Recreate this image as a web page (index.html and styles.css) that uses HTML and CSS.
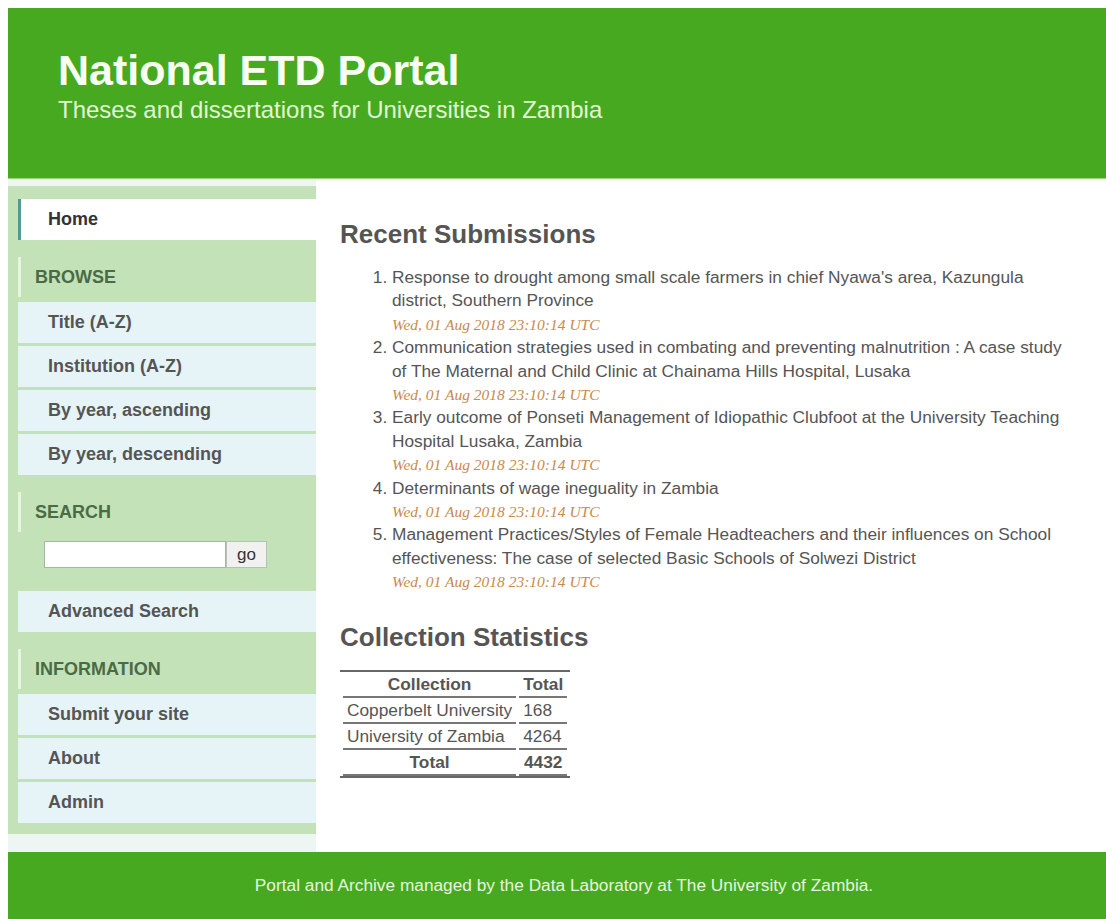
FILE: index.html
```html
<!DOCTYPE html>
<html lang="en">
<head>
<meta charset="utf-8">
<title>National ETD Portal</title>
<link rel="stylesheet" href="styles.css">
</head>
<body>
<div class="page">
  <header class="site-header">
    <h1 class="site-title">National ETD Portal</h1>
    <p class="site-tagline">Theses and dissertations for Universities in Zambia</p>
  </header>

  <div class="layout">
    <aside class="side-col">
      <nav class="sidebar">
        <a class="nav-item nav-item--active" href="#">Home</a>

        <h3 class="nav-heading">Browse</h3>
        <a class="nav-item" href="#">Title (A-Z)</a>
        <a class="nav-item" href="#">Institution (A-Z)</a>
        <a class="nav-item" href="#">By year, ascending</a>
        <a class="nav-item" href="#">By year, descending</a>

        <h3 class="nav-heading">Search</h3>
        <form class="search-form">
          <input class="search-input" type="text">
          <button class="search-btn" type="button">go</button>
        </form>
        <a class="nav-item" href="#">Advanced Search</a>

        <h3 class="nav-heading">Information</h3>
        <a class="nav-item" href="#">Submit your site</a>
        <a class="nav-item" href="#">About</a>
        <a class="nav-item" href="#">Admin</a>
      </nav>
    </aside>

    <main class="content">
      <h2 class="section-title">Recent Submissions</h2>
      <ol class="recent">
        <li>Response to drought among small scale farmers in chief Nyawa's area, Kazungula district, Southern Province
          <span class="stamp">Wed, 01 Aug 2018 23:10:14 UTC</span></li>
        <li>Communication strategies used in combating and preventing malnutrition : A case study of The Maternal and Child Clinic at Chainama Hills Hospital, Lusaka
          <span class="stamp">Wed, 01 Aug 2018 23:10:14 UTC</span></li>
        <li>Early outcome of Ponseti Management of Idiopathic Clubfoot at the University Teaching Hospital Lusaka, Zambia
          <span class="stamp">Wed, 01 Aug 2018 23:10:14 UTC</span></li>
        <li>Determinants of wage ineguality in Zambia
          <span class="stamp">Wed, 01 Aug 2018 23:10:14 UTC</span></li>
        <li>Management Practices/Styles of Female Headteachers and their influences on School effectiveness: The case of selected Basic Schools of Solwezi District
          <span class="stamp">Wed, 01 Aug 2018 23:10:14 UTC</span></li>
      </ol>

      <h2 class="section-title">Collection Statistics</h2>
      <table class="stats">
        <thead>
          <tr><th>Collection</th><th>Total</th></tr>
        </thead>
        <tbody>
          <tr><td>Copperbelt University</td><td>168</td></tr>
          <tr><td>University of Zambia</td><td>4264</td></tr>
        </tbody>
        <tfoot>
          <tr><th>Total</th><th>4432</th></tr>
        </tfoot>
      </table>
    </main>
  </div>

  <footer class="site-footer">
    Portal and Archive managed by the Data Laboratory at The University of Zambia.
  </footer>
</div>
</body>
</html>
```

FILE: styles.css
```css
html, body {
  background: #ffffff;
}

body {
  margin: 8px 0 0 8px;
  font-family: "Liberation Sans", Arial, sans-serif;
  color: #555555;
}

.page {
  display: flex;
  flex-direction: column;
}

/* Banner */
.site-header {
  background: #47a920;
  height: 171px;
  box-sizing: border-box;
  padding: 38px 0 0 50px;
  border-bottom: 1px solid #9bd37c;
}

.site-title {
  margin: 0;
  font-size: 43px;
  line-height: 48px;
  font-weight: bold;
  color: #f7fff2;
}

.site-tagline {
  margin: 2px 0 0;
  font-size: 24px;
  line-height: 28px;
  color: #e2f6d6;
}

/* Two-column body */
.layout {
  display: flex;
  align-items: stretch;
}

.side-col {
  width: 308px;
  flex: none;
  background: #edf6f3;
  padding: 7px 0 18px;
}

.sidebar {
  background: #c3e2b8;
  padding: 13px 0 8px 10px;
  display: flex;
  flex-direction: column;
}

.nav-item {
  display: block;
  height: 41px;
  line-height: 41px;
  margin-bottom: 3px;
  padding-left: 30px;
  background: #e7f4f7;
  color: #555555;
  font-size: 18px;
  font-weight: bold;
  text-decoration: none;
}

.nav-item--active {
  background: #ffffff;
  color: #333333;
  border-left: 3px solid #4f9d8c;
  padding-left: 27px;
}

.nav-heading {
  margin: 14px 0 5px;
  height: 40px;
  line-height: 40px;
  padding-left: 14px;
  border-left: 3px solid #e6f4e1;
  font-size: 18px;
  font-weight: bold;
  text-transform: uppercase;
  color: #4b6b47;
}

.search-form {
  display: flex;
  margin: 4px 0 23px 26px;
}

.search-input {
  width: 182px;
  height: 27px;
  box-sizing: border-box;
  margin: 0;
  border: 1px solid #a9b3a6;
  background: #ffffff;
  padding: 2px 4px;
}

.search-btn {
  width: 41px;
  height: 27px;
  box-sizing: border-box;
  margin: 0;
  border: 1px solid #b9beb8;
  background: #f1f1f0;
  font-family: "Liberation Sans", Arial, sans-serif;
  font-size: 17px;
  color: #333333;
  padding: 0;
}

/* Main column */
.content {
  flex: 1;
  padding: 40px 30px 20px 24px;
}

.section-title {
  margin: 0 0 17px;
  font-size: 26px;
  line-height: 30px;
  font-weight: bold;
  color: #555555;
}

.recent {
  margin: 0 0 28px;
  padding-left: 52px;
  font-size: 17.3px;
  line-height: 23.4px;
  color: #555555;
}

.stamp {
  display: block;
  font-family: "Liberation Serif", "Times New Roman", serif;
  font-style: italic;
  font-size: 15.5px;
  color: #c98a4c;
}

/* Statistics table */
.stats {
  margin-top: 18px;
  border-collapse: separate;
  border-spacing: 3px 0;
  border-top: 2px solid #666666;
  border-bottom: 2px solid #666666;
  font-size: 17.3px;
  color: #555555;
}

.stats th,
.stats td {
  padding: 0 4px;
  height: 24px;
  line-height: 24px;
  border-bottom: 2px solid #777777;
}

.stats th {
  font-weight: bold;
  text-align: center;
}

.stats td {
  text-align: left;
}

/* Footer */
.site-footer {
  background: #47a920;
  height: 67px;
  line-height: 67px;
  text-align: center;
  font-size: 17.3px;
  color: #e6f5df;
  padding-left: 14px;
}
```
